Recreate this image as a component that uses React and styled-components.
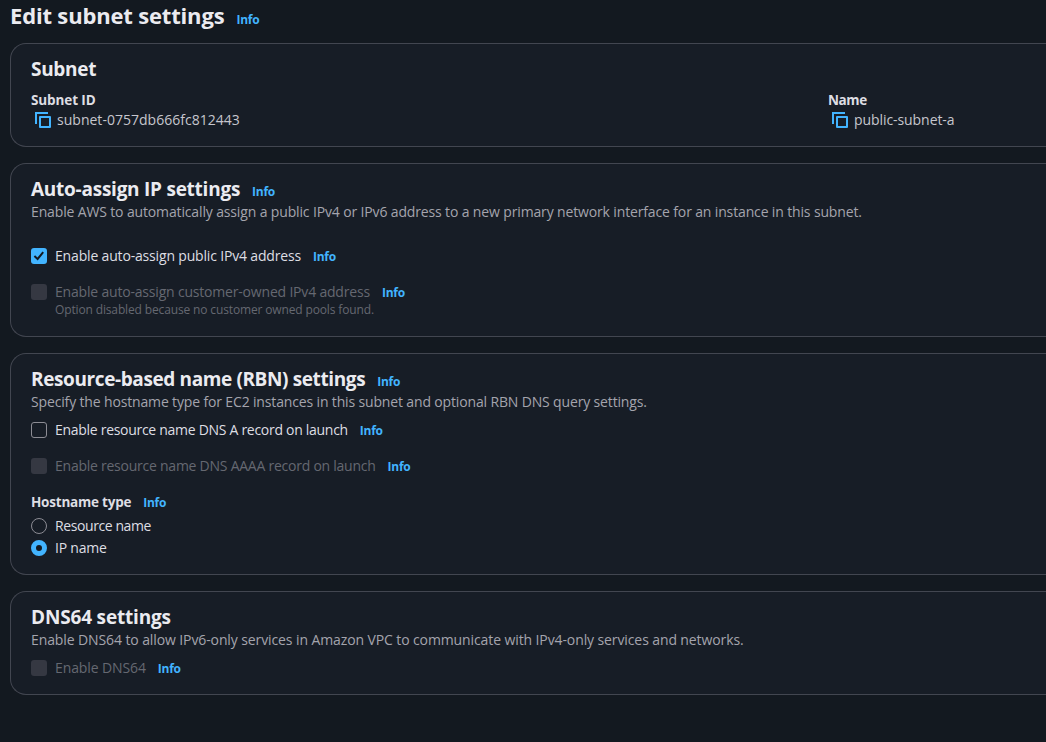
import React from "react";
import styled, { createGlobalStyle } from "styled-components";

const GlobalStyle = createGlobalStyle`
  * { box-sizing: border-box; }
  html, body { margin: 0; background: #131920; overflow: hidden; }
  body {
    font-family: "Open Sans", "Noto Sans", sans-serif;
    font-size: 14px;
    line-height: 20px;
    color: #dedee3;
  }
`;

const Page = styled.main`
  display: flex;
  flex-direction: column;
  gap: 16px;
  min-height: 742px;
  padding: 1px 0 0 10px;
  white-space: nowrap;
`;

const PageHeader = styled.header`
  display: flex;
  align-items: baseline;
  gap: 12px;
  height: 26px;
  line-height: 28px;
`;

const PageTitle = styled.h1`
  margin: 0;
  font-size: 22px;
  font-weight: 700;
  line-height: 28px;
  color: #ebebf0;
  letter-spacing: ${(p) => p.$tracking}px;
`;

const Panel = styled.section`
  display: flex;
  flex-direction: column;
  height: ${(p) => p.$height}px;
  padding: 13px 20px 0;
  background: #171d26;
  border: 1px solid #424650;
  border-right: 0;
  border-radius: 16px 0 0 16px;
`;

const PanelHeader = styled.div`
  display: flex;
  align-items: baseline;
  gap: 12px;
  height: 25px;
`;

const PanelTitle = styled.h2`
  margin: 0;
  font-size: 19px;
  font-weight: 700;
  line-height: 24px;
  color: #ebebf0;
  letter-spacing: ${(p) => p.$tracking}px;
`;

const Description = styled.p`
  margin: 0 0 ${(p) => p.$after}px;
  color: #a4a4ad;
  letter-spacing: ${(p) => p.$tracking}px;
`;

const InfoLink = styled.a`
  font-size: 12px;
  font-weight: 700;
  line-height: 16px;
  letter-spacing: -0.25px;
  color: #42b4ff;
`;

const Columns = styled.div`
  display: grid;
  grid-template-columns: 797px 1fr;
  padding-top: 8px;
`;

const FieldLabel = styled.div`
  font-size: 13.5px;
  font-weight: 700;
  letter-spacing: ${(p) => p.$tracking}px;
`;

const FieldHeader = styled.div`
  display: flex;
  align-items: baseline;
  gap: 12px;
  height: 24px;
`;

const CopyValue = styled.div`
  display: flex;
  align-items: center;
  gap: 6px;
  padding-left: 4px;
  height: 20px;
  color: #c6c6cd;
  letter-spacing: ${(p) => p.$tracking}px;
`;

const Option = styled.div`
  display: flex;
  align-items: center;
  height: 20px;
  margin-bottom: ${(p) => p.$after || 0}px;
`;

const OptionLabel = styled.span`
  display: flex;
  align-items: baseline;
  gap: 12px;
  margin-left: 8px;
`;

const OptionText = styled.span`
  color: ${(p) => (p.$disabled ? "#656871" : "#dedee3")};
  letter-spacing: ${(p) => p.$tracking}px;
`;

const OptionNote = styled.div`
  padding-left: 24px;
  font-size: 12px;
  line-height: 16px;
  color: #656871;
  letter-spacing: -0.14px;
`;

const boxFill = { on: "#42b4ff", off: "transparent", disabled: "#353842" };

const Checkbox = styled.span`
  display: flex;
  flex: none;
  width: 16px;
  height: 16px;
  border-radius: 3px;
  background: ${(p) => boxFill[p.$state]};
  border: ${(p) => (p.$state === "off" ? "1px solid #8c8c94" : "0")};
`;

const Radio = styled.span`
  flex: none;
  width: 16px;
  height: 16px;
  border-radius: 50%;
  background: ${(p) => (p.$checked ? "#131920" : "transparent")};
  border: ${(p) => (p.$checked ? "5px solid #42b4ff" : "1px solid #8c8c94")};
`;

const CopyIcon = () => (
  <svg width="16" height="16" viewBox="0 0 16 16" fill="none" stroke="#42b4ff" strokeWidth="2">
    <path d="M1 12V1h12" />
    <path d="M5 5h10v10H5z" strokeLinejoin="round" />
  </svg>
);

const CheckIcon = () => (
  <svg width="16" height="16" viewBox="0 0 16 16" fill="none" stroke="#131920" strokeWidth="2">
    <path d="M3.4 8.1 6.6 11 12.2 4.2" />
  </svg>
);

const Info = () => <InfoLink>Info</InfoLink>;

const CheckOption = ({ state, tracking, after, children }) => (
  <Option $after={after}>
    <Checkbox $state={state}>{state === "on" && <CheckIcon />}</Checkbox>
    <OptionLabel>
      <OptionText $disabled={state === "disabled"} $tracking={tracking}>{children}</OptionText>
      <Info />
    </OptionLabel>
  </Option>
);

const RadioOption = ({ checked, tracking, after, children }) => (
  <Option $after={after}>
    <Radio $checked={checked} />
    <OptionLabel>
      <OptionText $tracking={tracking}>{children}</OptionText>
    </OptionLabel>
  </Option>
);

export default function App() {
  return (
    <>
      <GlobalStyle />
      <Page>
        <PageHeader>
          <PageTitle $tracking={-0.17}>Edit subnet settings</PageTitle>
          <Info />
        </PageHeader>

        <Panel $height={104}>
          <PanelHeader>
            <PanelTitle $tracking={-0.3}>Subnet</PanelTitle>
          </PanelHeader>
          <Columns>
            <div>
              <FieldLabel $tracking={-0.1}>Subnet ID</FieldLabel>
              <CopyValue $tracking={0.02}><CopyIcon />subnet-0757db666fc812443</CopyValue>
            </div>
            <div>
              <FieldLabel $tracking={-0.4}>Name</FieldLabel>
              <CopyValue $tracking={-0.07}><CopyIcon />public-subnet-a</CopyValue>
            </div>
          </Columns>
        </Panel>

        <Panel $height={174}>
          <PanelHeader>
            <PanelTitle $tracking={-0.25}>Auto-assign IP settings</PanelTitle>
            <Info />
          </PanelHeader>
          <Description $after={24} $tracking={-0.142}>
            Enable AWS to automatically assign a public IPv4 or IPv6 address to a new primary network interface for an instance in this subnet.
          </Description>
          <CheckOption state="on" after={16} tracking={-0.17}>Enable auto-assign public IPv4 address</CheckOption>
          <CheckOption state="disabled" tracking={-0.19}>Enable auto-assign customer-owned IPv4 address</CheckOption>
          <OptionNote>Option disabled because no customer owned pools found.</OptionNote>
        </Panel>

        <Panel $height={222}>
          <PanelHeader>
            <PanelTitle $tracking={-0.385}>Resource-based name (RBN) settings</PanelTitle>
            <Info />
          </PanelHeader>
          <Description $after={8} $tracking={-0.15}>
            Specify the hostname type for EC2 instances in this subnet and optional RBN DNS query settings.
          </Description>
          <CheckOption state="off" after={16} tracking={-0.29}>Enable resource name DNS A record on launch</CheckOption>
          <CheckOption state="disabled" after={16} tracking={-0.245}>Enable resource name DNS AAAA record on launch</CheckOption>
          <FieldHeader>
            <FieldLabel $tracking={-0.22}>Hostname type</FieldLabel>
            <Info />
          </FieldHeader>
          <RadioOption after={2} tracking={-0.41}>Resource name</RadioOption>
          <RadioOption checked tracking={-0.2}>IP name</RadioOption>
        </Panel>

        <Panel $height={104}>
          <PanelHeader>
            <PanelTitle $tracking={-0.17}>DNS64 settings</PanelTitle>
          </PanelHeader>
          <Description $after={8} $tracking={-0.105}>
            Enable DNS64 to allow IPv6-only services in Amazon VPC to communicate with IPv4-only services and networks.
          </Description>
          <CheckOption state="disabled" tracking={-0.11}>Enable DNS64</CheckOption>
        </Panel>
      </Page>
    </>
  );
}
